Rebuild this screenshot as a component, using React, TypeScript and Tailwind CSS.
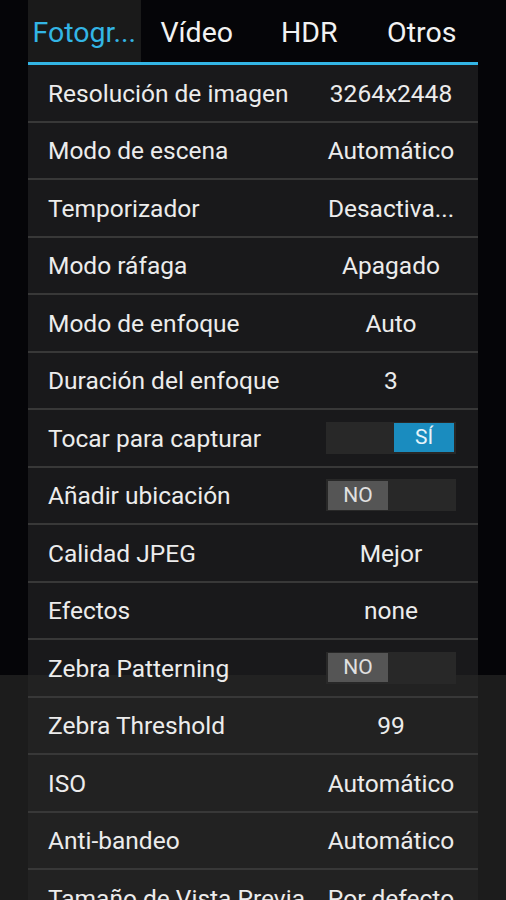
import React from 'react'

type Row =
  | { label: string; value: string }
  | { label: string; toggle: boolean }

const rows: Row[] = [
  { label: 'Resolución de imagen', value: '3264x2448' },
  { label: 'Modo de escena', value: 'Automático' },
  { label: 'Temporizador', value: 'Desactivado' },
  { label: 'Modo ráfaga', value: 'Apagado' },
  { label: 'Modo de enfoque', value: 'Auto' },
  { label: 'Duración del enfoque', value: '3' },
  { label: 'Tocar para capturar', toggle: true },
  { label: 'Añadir ubicación', toggle: false },
  { label: 'Calidad JPEG', value: 'Mejor' },
  { label: 'Efectos', value: 'none' },
  { label: 'Zebra Patterning', toggle: false },
  { label: 'Zebra Threshold', value: '99' },
  { label: 'ISO', value: 'Automático' },
  { label: 'Anti-bandeo', value: 'Automático' },
  { label: 'Tamaño de Vista Previa', value: 'Por defecto' },
]

const tabs = ['Fotografía', 'Vídeo', 'HDR', 'Otros']

function Toggle({ on }: { on: boolean }) {
  return (
    <div className={`flex h-[32px] w-[130px] items-center bg-[#282828] px-[2px] ${on ? 'justify-end' : 'justify-start'}`}>
      <div
        className={`flex h-[29px] w-[60px] items-center justify-center text-[21px] ${
          on ? 'bg-[#1a8cbf] text-[#e6f4fa]' : 'bg-[#555555] text-[#e0e0e0]'
        }`}
      >
        {on ? 'SÍ' : 'NO'}
      </div>
    </div>
  )
}

export default function App() {
  return (
    <div
      className="h-[900px] overflow-hidden bg-[linear-gradient(to_bottom,#050508_0px,#050508_675px,#1c1c1c_675px,#1c1c1c_100%)] px-[28px] text-[#ececec]"
      style={{ fontFamily: 'Roboto, "Noto Sans", sans-serif' }}
    >
      {/* pestañas */}
      <div className="flex h-[62px]">
        {tabs.map((t, i) => (
          <div
            key={t}
            className={`flex w-1/4 min-w-0 items-center justify-center px-[4px] pt-[4px] text-[28.5px] ${
              i === 0 ? 'bg-[#1a1a1a] text-[#33b5e5]' : 'text-[#f2f2f2]'
            }`}
          >
            <span className="whitespace-nowrap">{i === 0 ? 'Fotogr...' : t}</span>
          </div>
        ))}
      </div>
      <div className="h-[3px] bg-[#33b5e5]" />

      {/* lista de ajustes */}
      <div className="bg-[rgba(39,39,39,0.61)]">
        {rows.map((r, i) => (
          <div key={i}>
            {i > 0 && <div className="h-[2px] bg-[#383838]" />}
            <div className="flex h-[55.5px] items-center pl-[20px] pr-[22px] text-[24.5px]">
              <div className="min-w-0 flex-1 whitespace-nowrap pt-[3px]">{r.label}</div>
              <div className="flex w-[130px] shrink-0 justify-center whitespace-nowrap">
                {'toggle' in r ? (
                  <Toggle on={r.toggle} />
                ) : (
                  <span className="pt-[3px]">{r.value === 'Desactivado' ? 'Desactiva...' : r.value}</span>
                )}
              </div>
            </div>
          </div>
        ))}
      </div>
    </div>
  )
}
